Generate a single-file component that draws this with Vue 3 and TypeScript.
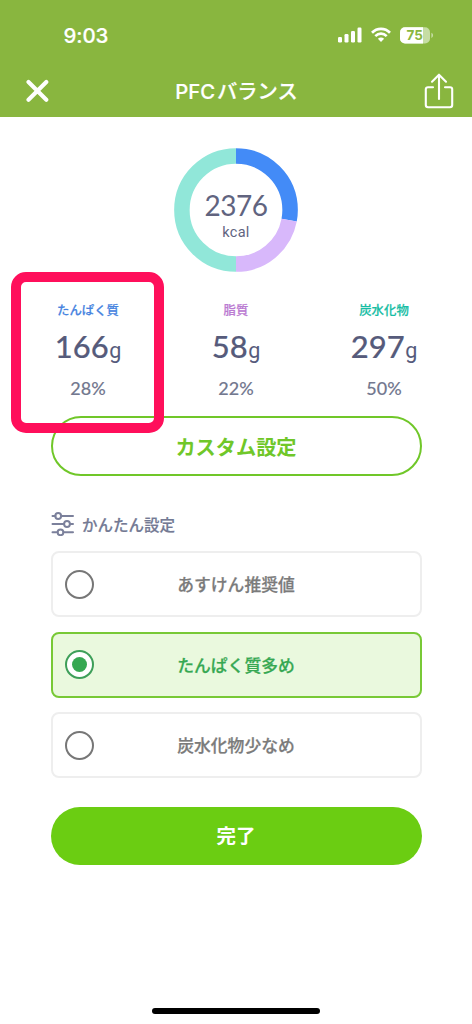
<script setup lang="ts">
import { ref } from 'vue'

interface Nutrient {
  name: string
  grams: number
  percent: number
  tone: string
}

const nutrients: Nutrient[] = [
  { name: 'たんぱく質', grams: 166, percent: 28, tone: 'protein' },
  { name: '脂質', grams: 58, percent: 22, tone: 'fat' },
  { name: '炭水化物', grams: 297, percent: 50, tone: 'carb' },
]
const presets: string[] = ['あすけん推奨値', 'たんぱく質多め', '炭水化物少なめ']
const selected = ref(1)

// Each ring segment starts where the previous one ends.
const offsetOf = (index: number): number =>
  -nutrients.slice(0, index).reduce((sum, n) => sum + n.percent, 0)
</script>

<template>
  <div class="screen">
    <header class="header">
      <div class="status">
        <span class="time">9:03</span>
        <div class="indicators">
          <svg class="signal" width="24" height="16" viewBox="0 0 24 16" fill="#fff">
            <rect x="0" y="10" width="4" height="5.5" rx="1.2" />
            <rect x="6.5" y="7" width="4" height="8.5" rx="1.2" />
            <rect x="13" y="4" width="4" height="11.5" rx="1.2" />
            <rect x="19.5" y="0.5" width="4" height="15" rx="1.2" />
          </svg>
          <svg class="wifi" width="20" height="16" viewBox="0 0 20 16" fill="none" stroke="#fff" stroke-width="2.7">
            <path d="M1 5.7C6 .6 14 .6 19 5.7" />
            <path d="M4.3 9.1C7.6 5.9 12.4 5.9 15.7 9.1" />
            <path d="M6.9 11.8C8.7 10 11.3 10 13.1 11.8L10 15.1Z" fill="#fff" stroke="none" />
          </svg>
          <svg class="battery" width="34" height="17" viewBox="0 0 34 17">
            <defs>
              <clipPath id="charge"><rect width="23" height="17" /></clipPath>
            </defs>
            <rect x="0" y="0.3" width="30" height="16.2" rx="5" fill="#c6dda4" />
            <rect x="0" y="0.3" width="30" height="16.2" rx="5" fill="#fff" clip-path="url(#charge)" />
            <path d="M31.4 5.8C33.6 6.8 33.6 10 31.4 11Z" fill="#c6dda4" />
            <text x="14.8" y="13.3" text-anchor="middle" class="level">75</text>
          </svg>
        </div>
      </div>
      <div class="nav">
        <svg class="close" width="24" height="24" viewBox="0 0 24 24" fill="none" stroke="#fff" stroke-width="4.1" stroke-linecap="round">
          <path d="M3.500 3L21.300 20.800M21.300 3L3.500 20.800" />
        </svg>
        <h1 class="title"><span class="latin">PFC</span>バランス</h1>
        <svg class="share" width="30" height="36" viewBox="0 0 30 36" fill="none" stroke="#fff" stroke-width="2.1" stroke-linecap="round" stroke-linejoin="round">
          <path d="M9 14.2H4C2.600 14.2 1.800 15 1.800 16.300V32C1.800 33.400 2.600 34.200 4 34.200H26C27.400 34.200 28.200 33.400 28.200 32V16.300C28.200 15 27.400 14.200 26 14.200H21" />
          <path d="M15 26V1.700M8 8.700L15 1.700L22 8.700" />
        </svg>
      </div>
    </header>

    <main class="content">
      <div class="ring">
        <svg class="ring-chart" width="124" height="124" viewBox="0 0 124 124">
          <g transform="rotate(-90 62 62)" fill="none" stroke-width="15.5">
            <circle
              v-for="(n, i) in nutrients"
              :key="n.name"
              :class="['segment', n.tone]"
              cx="62"
              cy="62"
              r="54.1"
              pathLength="100"
              :stroke-dasharray="`${n.percent} ${100 - n.percent}`"
              :stroke-dashoffset="offsetOf(i)"
            />
          </g>
        </svg>
        <div class="ring-text">
          <span class="total">2376</span>
          <span class="unit">kcal</span>
        </div>
      </div>

      <section class="nutrients">
        <div v-for="n in nutrients" :key="n.name" class="nutrient">
          <span :class="['name', n.tone]">{{ n.name }}</span>
          <span class="grams">{{ n.grams }}<small class="g">g</small></span>
          <span class="percent">{{ n.percent }}%</span>
          <div v-if="n.tone === 'protein'" class="highlight"></div>
        </div>
      </section>

      <button class="custom">カスタム設定</button>

      <h2 class="section">
        <svg width="24" height="24" viewBox="0 0 24 24" fill="none" stroke="#7b809b" stroke-width="2" stroke-linecap="round">
          <path d="M1.500 4H4.500M10.500 4H22M1.500 12H13M19 12H22M1.500 20.300H6.500M12.500 20.300H22" />
          <circle cx="7.200" cy="4" r="2.900" />
          <circle cx="16" cy="12" r="2.900" />
          <circle cx="9.500" cy="20.300" r="2.900" />
        </svg>
        かんたん設定
      </h2>

      <div class="presets">
        <button
          v-for="(preset, i) in presets"
          :key="preset"
          :class="['preset', { active: selected === i }]"
          @click="selected = i"
        >
          <span class="radio"><span class="dot"></span></span>
          <span class="preset-name">{{ preset }}</span>
        </button>
      </div>

      <button class="done">完了</button>
    </main>
    <div class="home"></div>
  </div>
</template>

<style>
body {
  margin: 0;
  background: #fff;
}
</style>

<style scoped>
.screen {
  box-sizing: border-box;
  width: 472px;
  height: 1024px;
  display: flex;
  flex-direction: column;
  overflow: hidden;
  background: #fff;
  font-family: 'Liberation Sans', 'Noto Sans CJK JP', sans-serif;
}
button {
  box-sizing: border-box;
  margin: 0;
  padding: 0;
  font-family: 'Noto Sans CJK JP', sans-serif;
}
.header {
  height: 117px;
  flex: none;
  background: #89b63f;
  color: #fff;
}
.status {
  height: 64px;
  display: flex;
  justify-content: space-between;
  padding: 0 38px 0 63.5px;
}
.time {
  font: 500 20.5px/71px Inter, sans-serif;
  letter-spacing: -0.1px;
  -webkit-text-stroke: 0.2px currentColor;
}
.indicators {
  display: flex;
  align-items: flex-start;
  padding-top: 27px;
}
.wifi {
  margin-left: 9px;
}
.battery {
  margin-left: 9px;
}
.level {
  font: 700 13.5px Inter, sans-serif;
  fill: #89b63f;
}
.nav {
  height: 53px;
  display: flex;
  align-items: center;
  justify-content: space-between;
  padding: 0 18px 0 25px;
}
.title {
  margin: 0;
  font: 500 20.3px/52px 'Noto Sans CJK JP', sans-serif;
  -webkit-text-stroke: 0.2px currentColor;
}
.latin {
  font: 500 20.3px/52px Inter, sans-serif;
  margin-right: 2px;
}
.content {
  display: flex;
  flex-direction: column;
  align-items: center;
  padding-top: 31px;
}
.ring {
  display: grid;
  width: 124px;
  height: 124px;
}
.ring-chart,
.ring-text {
  grid-area: 1 / 1;
}
.segment.protein {
  stroke: #438bf7;
}
.segment.fat {
  stroke: #d8b8fb;
}
.segment.carb {
  stroke: #91e7d9;
}
.ring-text {
  display: flex;
  flex-direction: column;
  align-items: center;
  color: #61647f;
}
.total {
  margin-top: 40px;
  font: 400 28px/34px Lato, sans-serif;
  letter-spacing: -0.5px;
}
.unit {
  margin-top: 2px;
  font: 400 14.5px/18px Roboto, sans-serif;
  letter-spacing: 0.3px;
}
.nutrients {
  width: 444px;
  height: 144px;
  display: grid;
  grid-template-columns: repeat(3, 148px);
}
.nutrient {
  position: relative;
  display: flex;
  flex-direction: column;
  align-items: center;
}
.name {
  margin-top: 28px;
  font: 500 12.4px/20px 'Noto Sans CJK JP', sans-serif;
  -webkit-text-stroke: 0.2px currentColor;
}
.name.protein {
  color: #4784df;
}
.name.fat {
  color: #bb7bd2;
}
.name.carb {
  color: #16bda4;
}
.grams {
  margin-top: 6px;
  color: #565b7b;
  font: 500 31px/40px Lato, sans-serif;
  -webkit-text-stroke: 0.15px currentColor;
}
.g {
  font-family: Roboto, sans-serif;
  font-size: 21.5px;
  font-weight: 400;
  margin-left: 0.5px;
  -webkit-text-stroke: 0;
}
.percent {
  margin-top: 6px;
  color: #73788f;
  font: 500 18px/22px Lato, sans-serif;
  -webkit-text-stroke: 0.1px currentColor;
}
.highlight {
  position: absolute;
  z-index: 1;
  box-sizing: border-box;
  top: 0;
  left: -3.5px;
  width: 153.5px;
  height: 161px;
  border: 10.3px solid #ff0f5b;
  border-radius: 15px;
}
.custom {
  width: 371px;
  height: 60px;
  border: 2.4px solid #70c729;
  border-radius: 30px;
  background: #fff;
  color: #70c729;
  font-size: 20.2px;
  font-weight: 700;
}
.section {
  width: 370px;
  height: 24px;
  margin: 36px 0 0;
  display: flex;
  align-items: center;
  gap: 7px;
  color: #747a94;
  font: 500 15.5px/24px 'Noto Sans CJK JP', sans-serif;
  -webkit-text-stroke: 0.2px currentColor;
}
.presets {
  display: flex;
  flex-direction: column;
  gap: 14.5px;
  margin-top: 15px;
}
.preset {
  width: 371px;
  height: 66px;
  display: grid;
  grid-template-columns: 29px 1fr 29px;
  align-items: center;
  padding: 0 12px;
  border: 2px solid #eee;
  border-radius: 8px;
  background: #fff;
  color: #7b7b7b;
}
.preset-name {
  font-size: 16.800px;
  font-weight: 500;
  line-height: 24px;
  -webkit-text-stroke: 0.25px currentColor;
}
.radio {
  box-sizing: border-box;
  width: 29px;
  height: 29px;
  display: grid;
  place-items: center;
  border: 2px solid #777;
  border-radius: 50%;
  background: #fff;
}
.preset.active {
  border-color: #78c936;
  background: #eaf9de;
  color: #36a852;
}
.active .radio {
  border-color: #3e9f59;
}
.active .dot {
  width: 15px;
  height: 15px;
  border-radius: 50%;
  background: #36a852;
}
.done {
  width: 371px;
  height: 58px;
  margin-top: 29px;
  padding-bottom: 3px;
  border: 0;
  border-radius: 29px;
  background: #6bcd12;
  color: #fff;
  font-size: 19.500px;
  font-weight: 700;
}
.home {
  width: 168px;
  height: 6px;
  margin: auto auto 10px;
  border-radius: 3px;
  background: #000;
}
</style>
